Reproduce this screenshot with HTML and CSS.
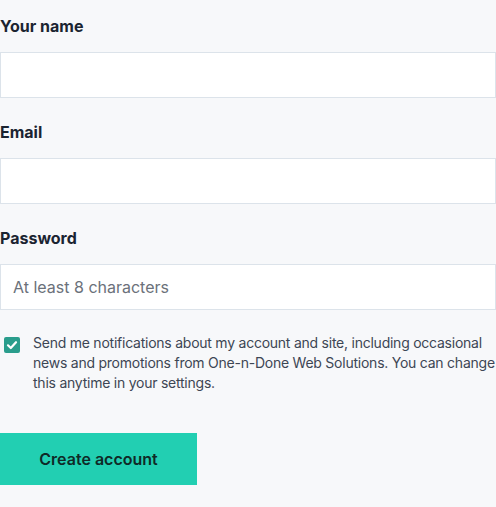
FILE: index.html
```html
<!DOCTYPE html>
<html lang="en">

<head>
    <meta charset="UTF-8">
    <meta name="viewport" content="width=device-width, initial-scale=1.0">
    <title>Create account</title>
    <link rel="stylesheet" href="styles.css">
</head>

<body>
    <form class="signup">
        <div class="field">
            <label for="name">Your name</label>
            <input type="text" id="name" class="text-input">
        </div>

        <div class="field">
            <label for="email">Email</label>
            <input type="email" id="email" class="text-input">
        </div>

        <div class="field">
            <label for="password">Password</label>
            <input type="password" id="password" class="text-input" placeholder="At least 8 characters">
        </div>

        <div class="consent">
            <span class="check">
                <svg width="12" height="12" viewBox="0 0 12 12">
                    <path d="M2 6.3 L4.8 9 L10 3.2" fill="none" stroke="#fff" stroke-width="2.2" stroke-linecap="round" stroke-linejoin="round" />
                </svg>
            </span>
            <p>Send me notifications about my account and site, including occasional news and promotions from One-n-Done Web Solutions. You can change this anytime in your settings.</p>
        </div>

        <button type="button" class="submit">Create account</button>
    </form>
</body>

</html>
```

FILE: styles.css
```css
* {
    box-sizing: border-box;
}

body {
    margin: 0;
    background-color: #f7f8fa;
    font-family: Inter, "Noto Sans", sans-serif;
}

.signup {
    display: flex;
    flex-direction: column;
    padding-top: 14px;
}

.field {
    display: flex;
    flex-direction: column;
    gap: 14px;
    margin-bottom: 22px;
}

.field label {
    font-size: 16px;
    line-height: 24px;
    font-weight: 700;
    color: #1b2431;
}

.text-input {
    width: 100%;
    height: 46px;
    margin: 0;
    padding: 0 12px;
    border: 1px solid #dce3ea;
    border-radius: 0;
    background-color: #fff;
    font-family: Inter, "Noto Sans", sans-serif;
    font-size: 16px;
    color: #1b2431;
}

.text-input::placeholder {
    color: #6b717a;
}

.consent {
    display: flex;
    align-items: flex-start;
    gap: 13px;
    margin-top: 1px;
}

.check {
    flex: none;
    width: 16px;
    height: 16px;
    margin: 4px 0 0 4px;
    border-radius: 2px;
    background-color: #2a9d8c;
    display: flex;
    align-items: center;
    justify-content: center;
}

.consent p {
    margin: 0;
    font-size: 14px;
    line-height: 20px;
    letter-spacing: -0.24px;
    color: #3d4654;
}

.submit {
    align-self: flex-start;
    margin-top: 40px;
    width: 197px;
    height: 52px;
    border: none;
    background-color: #22cfb2;
    color: #0f2a27;
    font-family: Inter, "Noto Sans", sans-serif;
    font-size: 16px;
    font-weight: 600;
}
```
